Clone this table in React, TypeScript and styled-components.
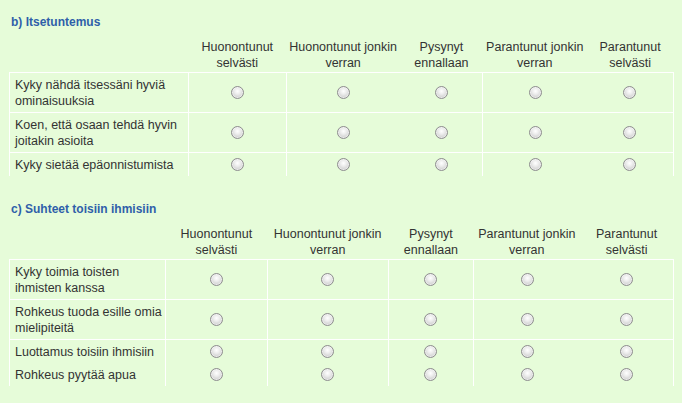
import React from "react";
import styled, { createGlobalStyle } from "styled-components";

const GlobalStyle = createGlobalStyle`
  html, body {
    margin: 0;
    padding: 0;
    background: #e6fcd9;
  }
  body {
    font-family: "Liberation Sans", Arial, sans-serif;
    color: #333;
  }
`;

type Column = { lines: string[]; width: number; line: boolean };
type Row = { lines: string[]; joined?: boolean };
type Section = {
  title: string;
  labelWidth: number;
  columns: Column[];
  rows: Row[];
  gapTop: number;
};

const Page = styled.div`
  width: 682px;
  height: 403px;
  box-sizing: border-box;
  padding: 14px 8px 0 9px;
  background: #e6fcd9;
  overflow: hidden;
`;

const Block = styled.section<{ $gapTop: number }>`
  margin-top: ${(p) => p.$gapTop}px;
`;

const Title = styled.h3`
  margin: 0 0 7px 2px;
  font-size: 12px;
  line-height: 16px;
  font-weight: bold;
  color: #2f5fa9;
`;

const Table = styled.table`
  border-collapse: collapse;
  table-layout: fixed;
  border-spacing: 0;
`;

const HeadCell = styled.th`
  padding: 2px 0 1px 0;
  font-size: 12.5px;
  line-height: 16px;
  font-weight: normal;
  text-align: center;
  vertical-align: bottom;
  white-space: nowrap;
  color: #333;
`;

const BodyRow = styled.tr<{ $joined?: boolean }>`
  & > td {
    border-top: ${(p) => (p.$joined ? "none" : "1px solid #fff")};
  }
`;

const LabelCell = styled.td`
  padding: 4px 2px 3px 5px;
  font-size: 12.5px;
  line-height: 16px;
  white-space: nowrap;
  vertical-align: middle;
  border-left: 1px solid #fff;
  color: #333;
`;

const ChoiceCell = styled.td<{ $line: boolean; $last: boolean }>`
  padding: 0;
  text-align: center;
  vertical-align: middle;
  border-left: ${(p) => (p.$line ? "1px solid #fff" : "none")};
  border-right: ${(p) => (p.$last ? "1px solid #fff" : "none")};
`;

const Radio = styled.input.attrs({ type: "radio" })`
  appearance: none;
  -webkit-appearance: none;
  display: block;
  margin: 0 auto;
  width: 13px;
  height: 13px;
  box-sizing: border-box;
  border-radius: 50%;
  border: 1px solid #8f8f8f;
  background: radial-gradient(
    circle at 50% 38%,
    #ffffff 0%,
    #ececec 35%,
    #cfcfcf 75%,
    #b5b5b5 100%
  );
  box-shadow: inset 0 0 0 1px rgba(255, 255, 255, 0.5);
`;

const Lines = ({ lines }: { lines: string[] }) => (
  <>
    {lines.map((l, i) => (
      <React.Fragment key={i}>
        {i > 0 && <br />}
        {l}
      </React.Fragment>
    ))}
  </>
);

const sections: Section[] = [
  {
    title: "b) Itsetuntemus",
    labelWidth: 179,
    gapTop: 0,
    columns: [
      { lines: ["Huonontunut", "selvästi"], width: 98, line: true },
      { lines: ["Huonontunut jonkin", "verran"], width: 114, line: true },
      { lines: ["Pysynyt", "ennallaan"], width: 83, line: false },
      { lines: ["Parantunut jonkin", "verran"], width: 104, line: true },
      { lines: ["Parantunut", "selvästi"], width: 87, line: false },
    ],
    rows: [
      { lines: ["Kyky nähdä itsessäni hyviä", "ominaisuuksia"] },
      { lines: ["Koen, että osaan tehdä hyvin", "joitakin asioita"] },
      { lines: ["Kyky sietää epäonnistumista"] },
    ],
  },
  {
    title: "c) Suhteet toisiin ihmisiin",
    labelWidth: 156,
    gapTop: 25,
    columns: [
      { lines: ["Huonontunut", "selvästi"], width: 102, line: true },
      { lines: ["Huonontunut jonkin", "verran"], width: 121, line: true },
      { lines: ["Pysynyt", "ennallaan"], width: 86, line: true },
      { lines: ["Parantunut jonkin", "verran"], width: 106, line: true },
      { lines: ["Parantunut", "selvästi"], width: 94, line: false },
    ],
    rows: [
      { lines: ["Kyky toimia toisten", "ihmisten kanssa"] },
      { lines: ["Rohkeus tuoda esille omia", "mielipiteitä"] },
      { lines: ["Luottamus toisiin ihmisiin"] },
      { lines: ["Rohkeus pyytää apua"], joined: true },
    ],
  },
];

const SurveySection = ({ s, idx }: { s: Section; idx: number }) => (
  <Block $gapTop={s.gapTop}>
    <Title>{s.title}</Title>
    <Table>
      <colgroup>
        <col style={{ width: s.labelWidth }} />
        {s.columns.map((c, i) => (
          <col key={i} style={{ width: c.width }} />
        ))}
      </colgroup>
      <thead>
        <tr>
          <HeadCell />
          {s.columns.map((c, i) => (
            <HeadCell key={i}>
              <Lines lines={c.lines} />
            </HeadCell>
          ))}
        </tr>
      </thead>
      <tbody>
        {s.rows.map((r, ri) => (
          <BodyRow key={ri} $joined={r.joined}>
            <LabelCell>
              <Lines lines={r.lines} />
            </LabelCell>
            {s.columns.map((c, ci) => (
              <ChoiceCell key={ci} $line={c.line} $last={ci === s.columns.length - 1}>
                <Radio name={`q-${idx}-${ri}`} aria-label={c.lines.join(" ")} />
              </ChoiceCell>
            ))}
          </BodyRow>
        ))}
      </tbody>
    </Table>
  </Block>
);

export default function App() {
  return (
    <>
      <GlobalStyle />
      <Page>
        {sections.map((s, i) => (
          <SurveySection key={i} s={s} idx={i} />
        ))}
      </Page>
    </>
  );
}
